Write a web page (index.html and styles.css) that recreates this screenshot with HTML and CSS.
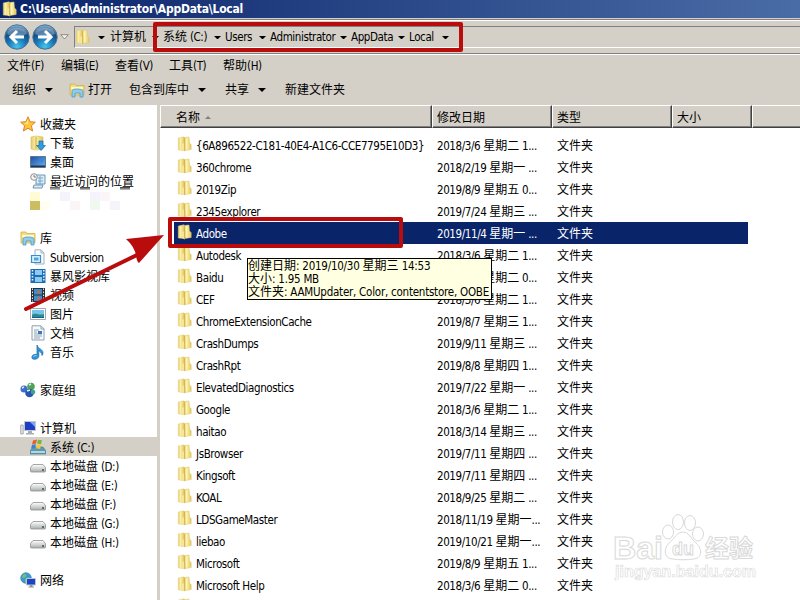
FILE: index.html
```
<!DOCTYPE html>
<html lang="zh-CN">

<head>
  <meta charset="UTF-8">
  <title>C:\Users\Administrator\AppData\Local</title>
  <link rel="stylesheet" href="styles.css">
</head>

<body>
  <svg width="0" height="0" class="defs">
    <defs>
      <linearGradient id="gold" x1="0" x2="1">
        <stop offset="0" stop-color="#e6cc6c"/><stop offset=".4" stop-color="#fbf0a8"/><stop offset="1" stop-color="#e2c65c"/>
      </linearGradient>
      <radialGradient id="ball" cx=".5" cy=".9" r=".85">
        <stop offset="0" stop-color="#45c5ee"/><stop offset=".45" stop-color="#1976b5"/><stop offset=".75" stop-color="#164d80"/><stop offset="1" stop-color="#7fa8cb"/>
      </radialGradient>
      <linearGradient id="sky" x2="1" y2="1">
        <stop offset="0" stop-color="#1c4fa6"/><stop offset="1" stop-color="#69b4ef"/>
      </linearGradient>
      <linearGradient id="metal" x2="0" y2="1">
        <stop offset="0" stop-color="#fff"/><stop offset="1" stop-color="#a9adab"/>
      </linearGradient>
    </defs>
    <symbol id="folder" viewBox="0 0 16 16">
      <path d="M7 1.500l5-.5.5 6 1.700 1.500v5l-6 1z" fill="url(#gold)" stroke="#dcc56e" stroke-width=".5"/>
      <path d="M1.300 2l5.700-1.200v13.700l-5.700-.5z" fill="url(#gold)" stroke="#e3cf80" stroke-width=".5"/>
      <path d="M5 14V8l2.500-1 .5 8.500z" fill="#f6e69a"/>
      <path d="M7.500 2v13" stroke="#cfae48" stroke-width=".8"/>
      <path d="M9.500 2.500v11" stroke="#fff3b5"/>
    </symbol>
    <symbol id="library" viewBox="0 0 16 16">
      <path d="M1 2h5l1 1.500h8V13H1z" fill="#f4db7b" stroke="#d2b04a" stroke-width=".8"/>
      <path d="M2 5h12v2H2z" fill="#fff8cc"/>
      <path d="M3 15V9.500C3 7.500 5 7 8 7s6 .5 6 2.500V15h-3v-4H6v4z" fill="#8dcdf0" stroke="#3c93c6" stroke-width=".7"/>
    </symbol>
    <symbol id="star" viewBox="0 0 16 16">
      <path d="M8 .8l2.100 4.900 5.200.5-3.900 3.500 1.200 5.300L8 12.200 3.400 15l1.200-5.300L.7 6.200l5.200-.5z" fill="#ffc43a" stroke="#d9822b"/>
      <path d="M8 3v5L4 7.500l2.500-.8z" fill="#fff0a0"/>
    </symbol>
    <symbol id="download" viewBox="0 0 16 16">
      <path d="M1 2l5-1 7 1v12l-7 1-5-1z" fill="url(#gold)" stroke="#d5bb5e" stroke-width=".6"/>
      <path d="M6 2v12" stroke="#c9a93f"/>
      <path d="M9 6h4v4.500h2.500L11 15.500 6.500 10.500H9z" fill="#2f9be0" stroke="#156bae" stroke-width=".7"/>
    </symbol>
    <symbol id="desktop" viewBox="0 0 16 16">
      <path d="M.5 2.500h15v11H.5z" fill="url(#sky)" stroke="#5d7892"/>
      <path d="M1 11.500h14v1.500H1z" fill="#23354e"/>
      <path d="M8 4l6 1-2 4z" fill="#3a83d8"/>
    </symbol>
    <symbol id="recent" viewBox="0 0 16 16">
      <path d="M6 2h9v9h-9zM4 12h9l-1 3H3z" fill="#d9edf9" stroke="#6e96b4"/>
      <path d="M8 5h5M8 8h5M10 3v8" stroke="#78a7c8"/>
      <circle cx="4" cy="4" r="3.300" fill="#f4f4f4" stroke="#929292"/>
      <path d="M4 2v2h2" fill="none" stroke="#666" stroke-width=".8"/>
    </symbol>
    <symbol id="subversion" viewBox="0 0 16 16">
      <path d="M5 .8h6l3 3V15H5z" fill="#f9fbfd" stroke="#a0b1c0"/>
      <path d="M11 1v3h3" fill="none" stroke="#a0b1c0"/>
      <path d="M1.500 6.500h9v7h-9z" fill="#d4efff" stroke="#3b8ec6" stroke-width="1.200"/>
      <path d="M4 8.500h4.500v3H4z" fill="#4ba8df"/>
    </symbol>
    <symbol id="movie" viewBox="0 0 16 16">
      <path d="M.5 1h15v14H.5z" fill="#1d6db4"/>
      <path d="M5 2h7v5H5zM5 9h7v5H5z" fill="#8bcaf2"/>
      <path d="M2.500 2v12M13.800 2v12" stroke="#e6f5ff" stroke-width="1.500" stroke-dasharray="1.500 1.500"/>
    </symbol>
    <symbol id="video" viewBox="0 0 16 16">
      <path d="M1 1h14v14H1z" fill="#27303b"/>
      <path d="M4 2h8v5.500H4zM4 8.500h8V14H4z" fill="#3b8bd0"/>
      <path d="M6 6l3-3 2 3zM7 12l2-3 2 4z" fill="#d4682f"/>
      <path d="M2.500 1.500v13M13.500 1.500v13" stroke="#e4e9ee" stroke-dasharray="1.500 1.500"/>
    </symbol>
    <symbol id="picture" viewBox="0 0 16 16">
      <path d="M.5 2.500h15v11H.5z" fill="#fff" stroke="#9eaab4"/>
      <path d="M2 4h12v8H2z" fill="#74c3ee"/>
      <path d="M2 9c4-3 7 1 12-1v4H2z" fill="#2c8b82"/>
      <path d="M2 11h12v1H2z" fill="#1c5797"/>
    </symbol>
    <symbol id="document" viewBox="0 0 16 16">
      <path d="M2 .8h9l3 3V15H2z" fill="#f8fbfd" stroke="#8ea0af"/>
      <path d="M11 1v3h3M4 5h5M4 7h3M4 9h8M4 11h8M4 13h6" fill="none" stroke="#8498a8" stroke-width=".9"/>
      <path d="M8 6h4v3H8z" fill="#3b79b9"/>
    </symbol>
    <symbol id="music" viewBox="0 0 16 16">
      <path d="M7 1c1 4 6 4 6 8 0 1-.5 2-1 2.500C12 8 9 7.500 8.800 6.500V12c0 2-2 3.300-4.300 3.300S1.500 14 2 12.500 4.500 10 7 10.500z" fill="#2f96dd" stroke="#1867a9" stroke-width=".7"/>
      <path d="M3.500 12.500c.8-1 2-1 3-.8" fill="none" stroke="#a9e0ff"/>
    </symbol>
    <symbol id="homegroup" viewBox="0 0 16 16">
      <circle cx="4" cy="7" r="3.500" fill="#3f6cc4"/>
      <circle cx="11" cy="4.500" r="3.800" fill="#4fa650"/>
      <circle cx="9.500" cy="11" r="4.300" fill="#2856ab"/>
      <circle cx="13" cy="10" r="2.300" fill="#3aa295"/>
      <path d="M2 6l2-1M9 3l2-1M7 9l3-1" stroke="#d9eeff" stroke-width="1.500"/>
    </symbol>
    <symbol id="computer" viewBox="0 0 16 16">
      <path d="M.7 5h2.500v9H.7z" fill="#e1e4e8" stroke="#8a929a" stroke-width=".7"/>
      <path d="M4.500 1.500h11v9h-11z" fill="#1e3fc4" stroke="#c3c8d0"/>
      <path d="M10 2h5v5z" fill="#7ba4f5"/>
      <path d="M8 11h4v2h2v1.500H6V13h2z" fill="#a6adb7"/>
    </symbol>
    <symbol id="system" viewBox="0 0 16 16">
      <path d="M3 8h10l3 4v3H0v-3z" fill="#5c9ab4" stroke="#44788f" stroke-width=".6"/>
      <path d="M1 12h14v2H1z" fill="#b8d4df"/>
      <path d="M3 1.500l4-1-1 4-4 1z" fill="#ea5b27"/><path d="M8 .8l4 .5-1 4-4-.8z" fill="#74b93a"/>
      <path d="M2 6l4-1-1 4-4 .5z" fill="#3884d3"/><path d="M7 5.500l4 .5-1 4-4-.8z" fill="#f9c62c"/>
    </symbol>
    <symbol id="drive" viewBox="0 0 16 16">
      <path d="M3 6.500h10L15.500 9.500v3.500q0 1-1 1h-13q-1 0-1-1V9.500z" fill="url(#metal)" stroke="#8d918f" stroke-width=".8"/>
      <path d="M1 9.700h14" stroke="#dcdedd"/>
      <path d="M12 11h2v2h-2z" fill="#52755a"/>
    </symbol>
    <symbol id="network" viewBox="0 0 16 16">
      <circle cx="6" cy="6" r="5.300" fill="#3d99d6" stroke="#2575ad" stroke-width=".6"/>
      <path d="M3 2.500c3-1.500 4 0 3 2S2 5 1.500 7zM5 7l4-2v4l-4 2z" fill="#6fc26b"/>
      <path d="M6.500 6.500h9v6.500h-9z" fill="#1b45c0" stroke="#bcc6d2"/>
      <path d="M10 13h2.500v1.500H14v1H8.500v-1H10z" fill="#8a94a0"/>
    </symbol>
    <symbol id="ball-left" viewBox="0 0 26 26">
      <circle cx="13" cy="13" r="12.200" fill="url(#ball)" stroke="#46749a"/>
      <path d="M3 10a10.500 9 0 0 1 20 0q-10 5-20 0z" fill="#fff" opacity=".28"/>
      <path d="M20 13H8M13 7l-6 6 6 6" fill="none" stroke="#fff" stroke-width="3"/>
    </symbol>
  </svg>

  <header class="titlebar">
    <svg class="icon"><use href="#folder"/></svg>
    <h1 class="titlebar__text">C:\Users\Administrator\AppData\Local</h1>
  </header>

  <nav class="address">
    <svg class="ball"><use href="#ball-left"/></svg>
    <svg class="ball ball--next"><use href="#ball-left"/></svg>
    <svg class="history" viewBox="0 0 9 6"><path d="M.7.7h7.600L4.500 5z" fill="#f4f2ee" stroke="#77736c" stroke-width=".8"/></svg>
    <div class="path">
      <svg class="icon"><use href="#folder"/></svg>
      <i class="arrow"></i>
      <span>计算机<i class="arrow"></i></span>
      <span>系统<b class="en"> (C:)</b><i class="arrow"></i></span>
      <span><b class="en">Users</b><i class="arrow"></i></span>
      <span><b class="en">Administrator</b><i class="arrow"></i></span>
      <span><b class="en">AppData</b><i class="arrow"></i></span>
      <span><b class="en">Local</b><i class="arrow"></i></span>
    </div>
  </nav>

  <nav class="menu">
    <span>文件<b class="en">(F)</b></span>
    <span>编辑<b class="en">(E)</b></span>
    <span>查看<b class="en">(V)</b></span>
    <span>工具<b class="en">(T)</b></span>
    <span>帮助<b class="en">(H)</b></span>
  </nav>

  <div class="toolbar">
    <span class="tool tool--drop">组织<i class="arrow arrow--big"></i></span>
    <span class="tool tool--open"><svg class="icon"><use href="#library"/></svg>打开</span>
    <span class="tool tool--drop">包含到库中<i class="arrow arrow--big"></i></span>
    <span class="tool tool--drop">共享<i class="arrow arrow--big"></i></span>
    <span class="tool">新建文件夹</span>
  </div>

  <main class="content">
    <aside class="sidebar">
      <div class="node"><svg class="icon"><use href="#star"/></svg>收藏夹</div>
      <div class="node node--child"><svg class="icon"><use href="#download"/></svg>下载</div>
      <div class="node node--child"><svg class="icon"><use href="#desktop"/></svg>桌面</div>
      <div class="node node--child"><svg class="icon"><use href="#recent"/></svg><span class="smudged">最近访问的位置</span></div>
      <div class="node node--child">
        <svg class="mosaic" viewBox="0 0 110 19">
          <path d="M0 1h10v9H0z" fill="#fffbd5"/><path d="M0 10h10v9H0z" fill="#cabd62"/><path d="M10 10h10v9H10z" fill="#fffef0"/>
          <path d="M30 1h10v9H30zM60 1h10v9H60zM80 10h10v9H80z" fill="#f5f3fc"/>
          <path d="M40 10h10v9H40zM70 1h10v9H70z" fill="#fbf5f8"/><path d="M60 10h10v9H60z" fill="#effaef"/>
        </svg>
      </div>
      <div class="node node--gap"></div>
      <div class="node"><svg class="icon"><use href="#library"/></svg>库</div>
      <div class="node node--child"><svg class="icon"><use href="#subversion"/></svg><b class="en">Subversion</b></div>
      <div class="node node--child"><svg class="icon"><use href="#movie"/></svg>暴风影视库</div>
      <div class="node node--child"><svg class="icon"><use href="#video"/></svg>视频</div>
      <div class="node node--child"><svg class="icon"><use href="#picture"/></svg>图片</div>
      <div class="node node--child"><svg class="icon"><use href="#document"/></svg>文档</div>
      <div class="node node--child"><svg class="icon"><use href="#music"/></svg>音乐</div>
      <div class="node node--gap"></div>
      <div class="node"><svg class="icon"><use href="#homegroup"/></svg>家庭组</div>
      <div class="node node--gap"></div>
      <div class="node"><svg class="icon"><use href="#computer"/></svg>计算机</div>
      <div class="node node--child node--active"><svg class="icon"><use href="#system"/></svg>系统<b class="en"> (C:)</b></div>
      <div class="node node--child"><svg class="icon"><use href="#drive"/></svg>本地磁盘<b class="en"> (D:)</b></div>
      <div class="node node--child"><svg class="icon"><use href="#drive"/></svg>本地磁盘<b class="en"> (E:)</b></div>
      <div class="node node--child"><svg class="icon"><use href="#drive"/></svg>本地磁盘<b class="en"> (F:)</b></div>
      <div class="node node--child"><svg class="icon"><use href="#drive"/></svg>本地磁盘<b class="en"> (G:)</b></div>
      <div class="node node--child"><svg class="icon"><use href="#drive"/></svg>本地磁盘<b class="en"> (H:)</b></div>
      <div class="node node--gap"></div>
      <div class="node"><svg class="icon"><use href="#network"/></svg>网络</div>
    </aside>

    <section class="files">
      <div class="files__head">
        <span>名称<i class="sort"></i></span>
        <span>修改日期</span>
        <span>类型</span>
        <span>大小</span>
        <span></span>
      </div>
      <div class="files__list">
        <div class="row"><svg class="icon"><use href="#folder"/></svg><b class="en">{6A896522-C181-40E4-A1C6-CCE7795E10D3}</b><span><b class="en">2018/3/6 </b>星期二<b class="en"> 1...</b></span><span>文件夹</span></div>
        <div class="row"><svg class="icon"><use href="#folder"/></svg><b class="en">360chrome</b><span><b class="en">2018/2/19 </b>星期一<b class="en"> ...</b></span><span>文件夹</span></div>
        <div class="row"><svg class="icon"><use href="#folder"/></svg><b class="en">2019Zip</b><span><b class="en">2019/8/9 </b>星期五<b class="en"> 0...</b></span><span>文件夹</span></div>
        <div class="row"><svg class="icon"><use href="#folder"/></svg><b class="en">2345explorer</b><span><b class="en">2019/7/24 </b>星期三<b class="en"> ...</b></span><span>文件夹</span></div>
        <div class="row row--selected"><svg class="icon"><use href="#folder"/></svg><b class="en">Adobe</b><span><b class="en">2019/11/4 </b>星期一<b class="en"> ...</b></span><span>文件夹</span></div>
        <div class="row"><svg class="icon"><use href="#folder"/></svg><b class="en">Autodesk</b><span><b class="en">2018/3/6 </b>星期二<b class="en"> 1...</b></span><span>文件夹</span></div>
        <div class="row"><svg class="icon"><use href="#folder"/></svg><b class="en">Baidu</b><span><b class="en">2018/3/6 </b>星期二<b class="en"> 0...</b></span><span>文件夹</span></div>
        <div class="row"><svg class="icon"><use href="#folder"/></svg><b class="en">CEF</b><span><b class="en">2018/3/6 </b>星期二<b class="en"> 1...</b></span><span>文件夹</span></div>
        <div class="row"><svg class="icon"><use href="#folder"/></svg><b class="en">ChromeExtensionCache</b><span><b class="en">2019/8/7 </b>星期三<b class="en"> 1...</b></span><span>文件夹</span></div>
        <div class="row"><svg class="icon"><use href="#folder"/></svg><b class="en">CrashDumps</b><span><b class="en">2019/9/11 </b>星期三<b class="en"> ...</b></span><span>文件夹</span></div>
        <div class="row"><svg class="icon"><use href="#folder"/></svg><b class="en">CrashRpt</b><span><b class="en">2019/8/8 </b>星期四<b class="en"> 1...</b></span><span>文件夹</span></div>
        <div class="row"><svg class="icon"><use href="#folder"/></svg><b class="en">ElevatedDiagnostics</b><span><b class="en">2019/7/22 </b>星期一<b class="en"> ...</b></span><span>文件夹</span></div>
        <div class="row"><svg class="icon"><use href="#folder"/></svg><b class="en">Google</b><span><b class="en">2018/3/6 </b>星期二<b class="en"> 1...</b></span><span>文件夹</span></div>
        <div class="row"><svg class="icon"><use href="#folder"/></svg><b class="en">haitao</b><span><b class="en">2018/3/14 </b>星期三<b class="en"> ...</b></span><span>文件夹</span></div>
        <div class="row"><svg class="icon"><use href="#folder"/></svg><b class="en">JsBrowser</b><span><b class="en">2019/7/11 </b>星期四<b class="en"> ...</b></span><span>文件夹</span></div>
        <div class="row"><svg class="icon"><use href="#folder"/></svg><b class="en">Kingsoft</b><span><b class="en">2019/7/11 </b>星期四<b class="en"> ...</b></span><span>文件夹</span></div>
        <div class="row"><svg class="icon"><use href="#folder"/></svg><b class="en">KOAL</b><span><b class="en">2018/9/25 </b>星期二<b class="en"> ...</b></span><span>文件夹</span></div>
        <div class="row"><svg class="icon"><use href="#folder"/></svg><b class="en">LDSGameMaster</b><span><b class="en">2018/11/19 </b>星期一<b class="en">...</b></span><span>文件夹</span></div>
        <div class="row"><svg class="icon"><use href="#folder"/></svg><b class="en">liebao</b><span><b class="en">2019/10/21 </b>星期一<b class="en">...</b></span><span>文件夹</span></div>
        <div class="row"><svg class="icon"><use href="#folder"/></svg><b class="en">Microsoft</b><span><b class="en">2019/8/9 </b>星期五<b class="en"> 1...</b></span><span>文件夹</span></div>
        <div class="row"><svg class="icon"><use href="#folder"/></svg><b class="en">Microsoft Help</b><span><b class="en">2018/3/6 </b>星期二<b class="en"> 0...</b></span><span>文件夹</span></div>
        <div class="row"><svg class="icon"><use href="#folder"/></svg></div>
      </div>
    </section>
  </main>

  <div class="tooltip">
    <p>创建日期<b class="en">: 2019/10/30 </b>星期三<b class="en"> 14:53</b></p>
    <p>大小<b class="en">: 1.95 MB</b></p>
    <p>文件夹<b class="en">: AAMUpdater, Color, contentstore, OOBE</b></p>
  </div>

  <div class="mark mark--path"></div>
  <div class="mark mark--row"></div>
  <svg class="pointer" viewBox="0 0 150 84">
    <path d="M2 76L113 22" stroke="#b90d0d" stroke-width="4" stroke-linecap="round"/>
    <path d="M140 2L102 6Q111 14 112 23Q113 29 115 30Z" fill="#b90d0d"/>
  </svg>

  <svg class="watermark" viewBox="0 0 150 80">
    <g fill="#fff" stroke="#d9d9d9" stroke-width="1">
      <text class="watermark__logo" x="2" y="49" textLength="50" lengthAdjust="spacingAndGlyphs">Bai</text>
      <ellipse cx="57" cy="22" rx="5.500" ry="7"/>
      <ellipse cx="67" cy="12" rx="5.500" ry="7.500"/>
      <ellipse cx="79" cy="13" rx="5.500" ry="7.500"/>
      <ellipse cx="87" cy="24" rx="5.500" ry="7"/>
      <path d="M72 22c6 0 8 7 13 11 7 6 6 16-3 16-5 1-15 1-20 0-9 0-10-10-4-16 5-4 8-11 14-11z"/>
      <text class="watermark__du" x="61" y="45" textLength="22" lengthAdjust="spacingAndGlyphs">du</text>
      <text class="watermark__zh" x="94" y="47">经验</text>
      <text class="watermark__url" x="4" y="67" textLength="141" lengthAdjust="spacingAndGlyphs">jingyan.baidu.com</text>
    </g>
  </svg>
</body>

</html>
```
FILE: styles.css
```
* {
  box-sizing: border-box;
}

body {
  margin: 0;
  width: 800px;
  height: 600px;
  overflow: hidden;
  position: relative;
  display: flex;
  flex-direction: column;
  background-color: #d4d0c8;
  color: #000;
  font-family: "DejaVu Sans Condensed", "Noto Sans CJK SC", sans-serif;
  font-size: 12px;
  line-height: 16px;
  white-space: nowrap;
}

.defs {
  position: absolute;
}

.en {
  font-family: "DejaVu Sans Condensed", sans-serif;
  font-weight: normal;
  font-size: 11.5px;
  letter-spacing: -0.4px;
  white-space: pre;
}

.icon {
  width: 16px;
  height: 16px;
  flex: none;
}

.arrow {
  flex: none;
  border: 3.5px solid transparent;
  border-top: 4px solid #000;
  border-bottom: 0;
}

.arrow--big {
  border-width: 4px 4px 0;
}

/* title */

.titlebar {
  height: 18px;
  flex: none;
  display: flex;
  align-items: center;
  padding-left: 2px;
  gap: 2px;
  background: linear-gradient(to right, #0a246a, #4a6ca6);
}

.titlebar__text {
  margin: 0;
  color: #fff;
  font-size: 12px;
  font-weight: bold;
  letter-spacing: -0.22px;
}

/* address */

.address {
  height: 37px;
  flex: none;
  display: flex;
  align-items: center;
  border-top: 1px solid #d4d0c8;
  border-bottom: 1px solid #fff;
  padding-left: 4px;
  box-shadow: inset 0 1px #808080, inset 0 2px #fff, inset 0 -1px #808080;
}

.ball {
  width: 26px;
  height: 26px;
  margin-right: 2px;
}

.ball--next {
  transform: scaleX(-1);
}

.history {
  width: 9px;
  height: 6px;
}

.path {
  flex: 1;
  height: 22px;
  margin: 1px 0 0 5px;
  display: grid;
  grid-template-columns: 23px 12px 53px 62px 45px 81px 58px 60px;
  align-items: center;
  border: 1px solid #808080;
  border-right: 0;
  border-bottom-color: #fff;
}

.path span {
  display: flex;
  align-items: center;
  padding-right: 4px;
}

.path span:last-child {
  padding-right: 20px;
}

.path .arrow {
  width: 7px;
  border-width: 3px 3px 0;
}

.path span .arrow {
  margin-left: auto;
}

/* menu and toolbar */

.menu {
  height: 21px;
  flex: none;
  display: grid;
  grid-template-columns: repeat(5, 54px);
  align-items: center;
  padding-left: 7px;
}

.toolbar {
  height: 29px;
  flex: none;
  display: flex;
  align-items: center;
  padding: 0 0 2px 12px;
}

.tool {
  display: flex;
  align-items: center;
}

.tool--drop {
  gap: 9px;
  margin-right: 19px;
}

.tool--open {
  gap: 3px;
  margin: 0 17px 0 -3px;
}

/* content */

.content {
  flex: 1;
  min-height: 0;
  display: flex;
}

.sidebar {
  width: 157px;
  flex: none;
  margin-right: 3px;
  padding-top: 9px;
  overflow: hidden;
  background-color: #fff;
}

.node {
  height: 19px;
  display: flex;
  align-items: center;
  padding: 2px 0 0 20px;
}

.node .icon {
  margin: -2px 4px 0 0;
}

.node--child {
  padding-left: 30px;
}

.node--active {
  background-color: #d4d0c8;
}

.mosaic {
  width: 110px;
  height: 19px;
}

.smudged {
  background: linear-gradient(#555, #ccc) 0 100% / 10px 3px no-repeat, linear-gradient(#333, #ccc) 30px 100% / 10px 3px no-repeat, linear-gradient(#333, #ccc) 70px 100% / 10px 3px no-repeat;
}

.files {
  flex: 1;
  min-width: 0;
  overflow: hidden;
  background-color: #fff;
}

.files__head {
  height: 23px;
  display: grid;
  grid-template-columns: 272px 120px 120px 80px 1fr;
  background-color: #d4d0c8;
}

.files__head span {
  display: flex;
  align-items: center;
  padding: 2px 0 0 4px;
  border-top: 1px solid #fff;
  border-left: 1px solid #fff;
  border-right: 1px solid #404040;
  border-bottom: 1px solid #404040;
  box-shadow: inset -1px -1px #808080;
}

.files__head span:first-child {
  padding-left: 15px;
}

.files__head span:last-child {
  border-right: 0;
  box-shadow: inset 0 -1px #808080;
}

.sort {
  margin-left: 5px;
  border: 3px solid transparent;
  border-bottom: 3px solid #808080;
  border-top: 0;
}

.files__list {
  padding: 6px 0 0 14px;
}

.row {
  width: 574px;
  height: 22px;
  display: grid;
  grid-template-columns: 19px 241px 120px 1fr;
  align-items: center;
  padding: 2px 0 0 3px;
}

.row .icon {
  margin-top: -4px;
}

.row--selected {
  background-color: #0a246a;
  color: #fff;
}

/* things over the window */

.tooltip {
  position: absolute;
  left: 247px;
  top: 258px;
  width: 245px;
  height: 42px;
  padding: 1px 0 0;
  border: 1px solid #000;
  background-color: #ffffe1;
  line-height: 13px;
}

.tooltip p {
  margin: 0;
  height: 13px;
}

.tooltip .en {
  letter-spacing: -0.24px;
}

.mark {
  position: absolute;
  border: 4px solid #b90d0d;
  border-radius: 2px;
}

.mark--path {
  left: 153px;
  top: 22px;
  width: 310px;
  height: 30px;
}

.mark--row {
  left: 168px;
  top: 217px;
  width: 235px;
  height: 31px;
}

.pointer {
  position: absolute;
  left: 24px;
  top: 233px;
  width: 150px;
  height: 84px;
}

.watermark {
  position: absolute;
  left: 611px;
  top: 510px;
  width: 150px;
  height: 80px;
}

.watermark text {
  font-family: "Liberation Sans", "Noto Sans CJK SC", sans-serif;
  font-weight: bold;
}

.watermark__logo {
  font-size: 32px;
}

.watermark__du {
  font-size: 19px;
}

.watermark__zh {
  font-size: 24px;
}

.watermark__url {
  font-size: 16px;
  stroke-width: 0.6px;
}
```
